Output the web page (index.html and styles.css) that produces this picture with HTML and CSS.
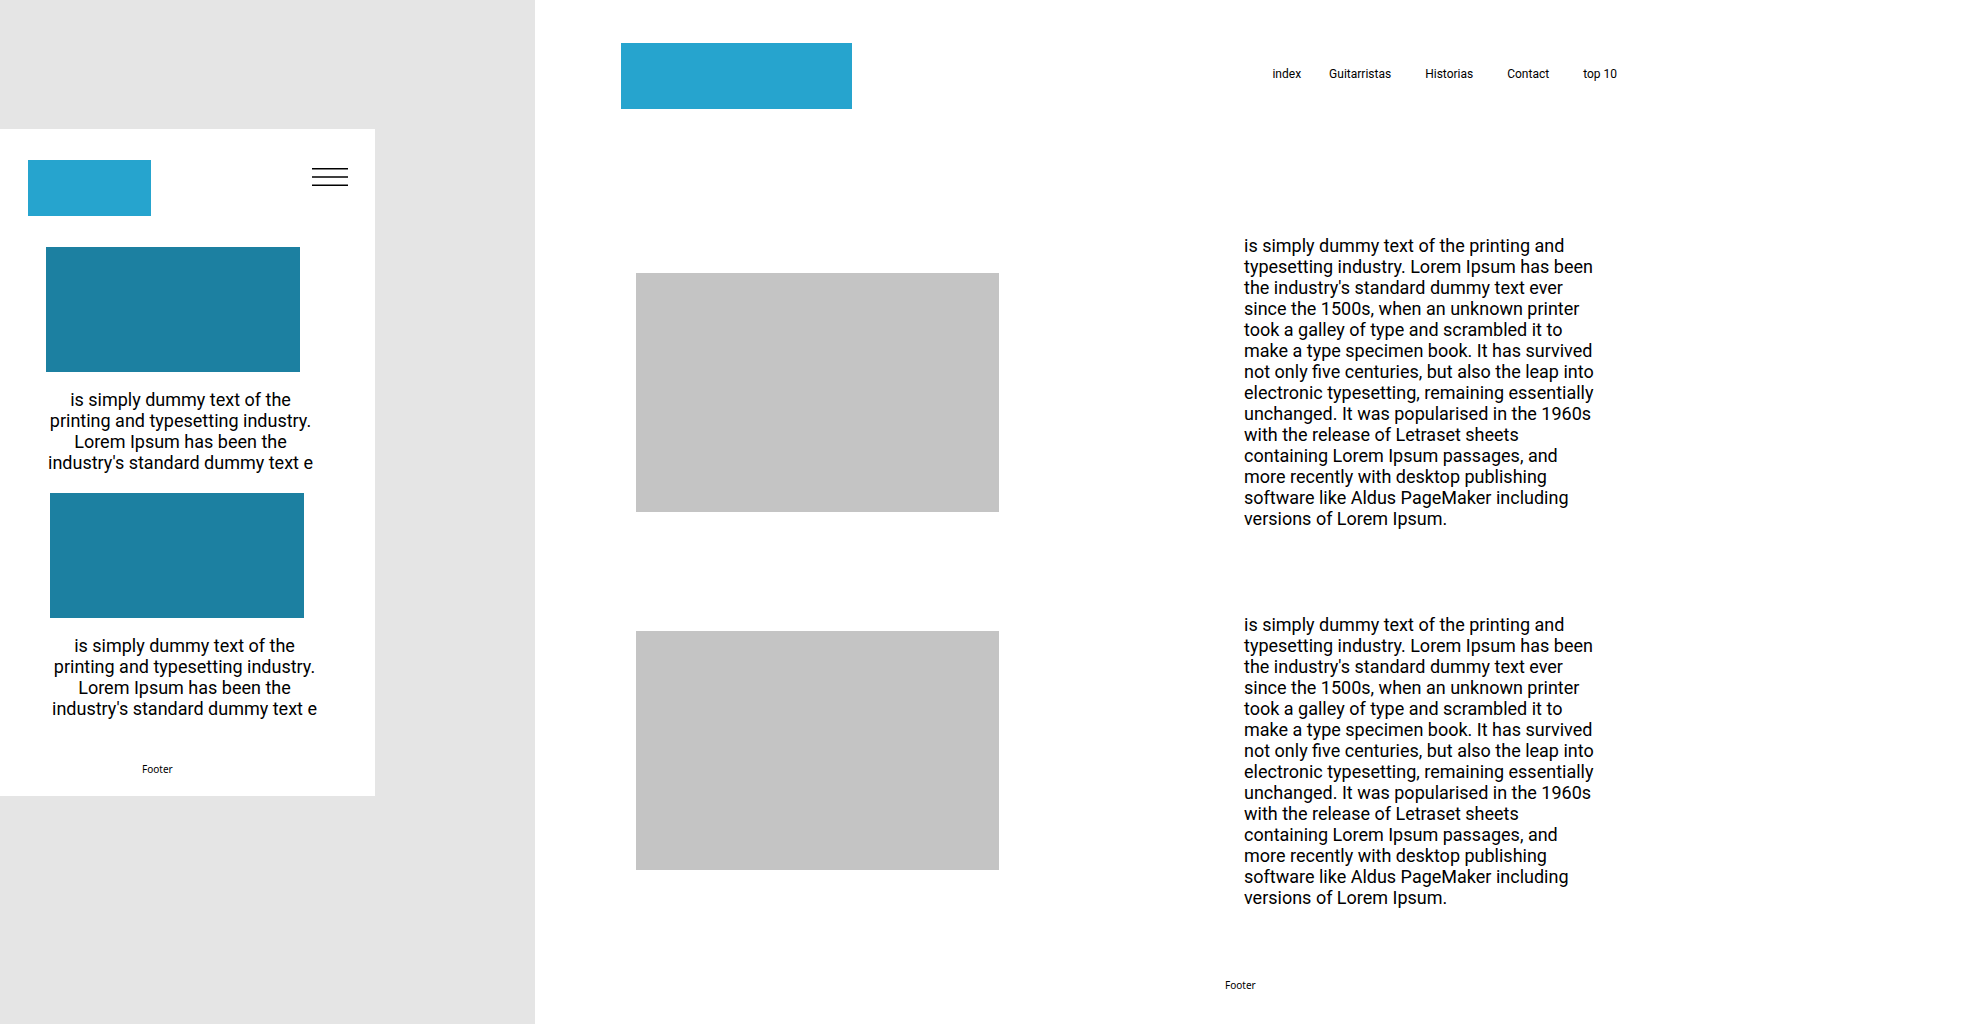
FILE: index.html
```html
<!DOCTYPE html>
<html lang="en">
<head>
  <meta charset="utf-8">
  <meta name="viewport" content="width=device-width, initial-scale=1">
  <title>Guitarristas</title>
  <link rel="stylesheet" href="styles.css">
</head>
<body class="board">
  <section class="board-side" aria-label="Mobile layout">
    <div class="phone">
      <header class="phone-header">
        <div class="phone-logo"></div>
        <button class="menu-button" type="button" aria-label="Open menu">
          <svg width="36" height="18" viewBox="0 0 36 18" stroke="#000" stroke-width="1.5" aria-hidden="true">
            <path d="M0 .75H36M0 9H36M0 17.25H36"/>
          </svg>
        </button>
      </header>
      <main class="phone-cards">
        <article class="card">
          <div class="card-image"></div>
          <p class="copy">is simply dummy text of the printing and typesetting industry. Lorem Ipsum has been the industry's standard dummy text e</p>
        </article>
        <article class="card card-end">
          <div class="card-image"></div>
          <p class="copy">is simply dummy text of the printing and typesetting industry. Lorem Ipsum has been the industry's standard dummy text e</p>
        </article>
      </main>
      <footer class="footer phone-footer">Footer</footer>
    </div>
  </section>

  <section class="desktop" aria-label="Desktop layout">
    <header class="desktop-header">
      <div class="desktop-logo"></div>
      <nav class="nav">
        <a href="#index">index</a>
        <ul class="nav-list">
          <li><a href="#guitarristas">Guitarristas</a></li>
          <li><a href="#historias">Historias</a></li>
          <li><a href="#contact">Contact</a></li>
          <li><a href="#top">top 10</a></li>
        </ul>
      </nav>
    </header>
    <main class="stories">
      <article class="story">
        <div class="story-image"></div>
        <p class="copy story-text">is simply dummy text of the printing and typesetting industry. Lorem Ipsum has been the industry's standard dummy text ever since the 1500s, when an unknown printer took a galley of type and scrambled it to make a type specimen book. It has survived not only five centuries, but also the leap into electronic typesetting, remaining essentially unchanged. It was popularised in the 1960s with the release of Letraset sheets containing Lorem Ipsum passages, and more recently with desktop publishing software like Aldus PageMaker including versions of Lorem Ipsum.</p>
      </article>
      <article class="story">
        <div class="story-image"></div>
        <p class="copy story-text">is simply dummy text of the printing and typesetting industry. Lorem Ipsum has been the industry's standard dummy text ever since the 1500s, when an unknown printer took a galley of type and scrambled it to make a type specimen book. It has survived not only five centuries, but also the leap into electronic typesetting, remaining essentially unchanged. It was popularised in the 1960s with the release of Letraset sheets containing Lorem Ipsum passages, and more recently with desktop publishing software like Aldus PageMaker including versions of Lorem Ipsum.</p>
      </article>
    </main>
    <footer class="footer desktop-footer">Footer</footer>
  </section>
</body>
</html>
```
FILE: styles.css
```css
* {
  box-sizing: border-box;
}

.board {
  display: flex;
  min-height: 100vh;
  margin: 0;
  background: #e5e5e5;
  color: #000;
  font-family: Roboto, sans-serif;
}

.copy {
  margin: 0;
  font-size: 18px;
  line-height: 21px;
}

.footer {
  font-family: "Noto Sans", sans-serif;
  font-size: 10px;
  line-height: 14px;
}

/* Mobile layout */

.board-side {
  flex: 0 0 535px;
  padding: 129px 160px 0 0;
}

.phone {
  padding: 31px 27px 20px 28px;
  background: #fff;
}

.phone-header {
  display: flex;
  justify-content: space-between;
  align-items: flex-start;
}

.phone-logo {
  width: 123px;
  height: 56px;
  background: #26a4ce;
}

.menu-button {
  margin-top: 8px;
  padding: 0;
  border: 0;
  background: none;
  cursor: pointer;
}

.menu-button svg {
  display: block;
}

.phone-cards {
  display: flex;
  flex-direction: column;
  gap: 20px;
  width: 273px;
  margin: 31px 0 43px 18px;
}

.card {
  width: 269px;
  text-align: center;
}

.card-end {
  align-self: flex-end;
}

.card-image {
  width: 254px;
  height: 125px;
  margin-bottom: 17px;
  background: #1c80a1;
}

.phone-footer {
  padding-left: 114px;
}

/* Desktop layout */

.desktop {
  flex: 1;
  background: #fff;
}

.desktop-header {
  display: flex;
  justify-content: space-between;
  align-items: flex-start;
  padding: 43px 358px 0 86px;
}

.desktop-logo {
  width: 231px;
  height: 66px;
  background: #26a4ce;
}

.nav {
  display: flex;
  gap: 28px;
  margin-top: 24px;
  font-size: 12px;
  line-height: 14px;
}

.nav a {
  color: inherit;
  text-decoration: none;
}

.nav-list {
  display: flex;
  gap: 34px;
  margin: 0;
  padding: 0;
  list-style: none;
}

.stories {
  display: flex;
  flex-direction: column;
  gap: 85px;
  padding: 126px 379px 0 101px;
}

.story {
  display: flex;
  justify-content: space-between;
  align-items: flex-start;
}

.story-image {
  width: 363px;
  height: 239px;
  margin-top: 38px;
  background: #c4c4c4;
}

.story + .story .story-image {
  margin-top: 17px;
}

.story-text {
  width: 352px;
}

.desktop-footer {
  padding: 70px 0 32px 690px;
}
```
